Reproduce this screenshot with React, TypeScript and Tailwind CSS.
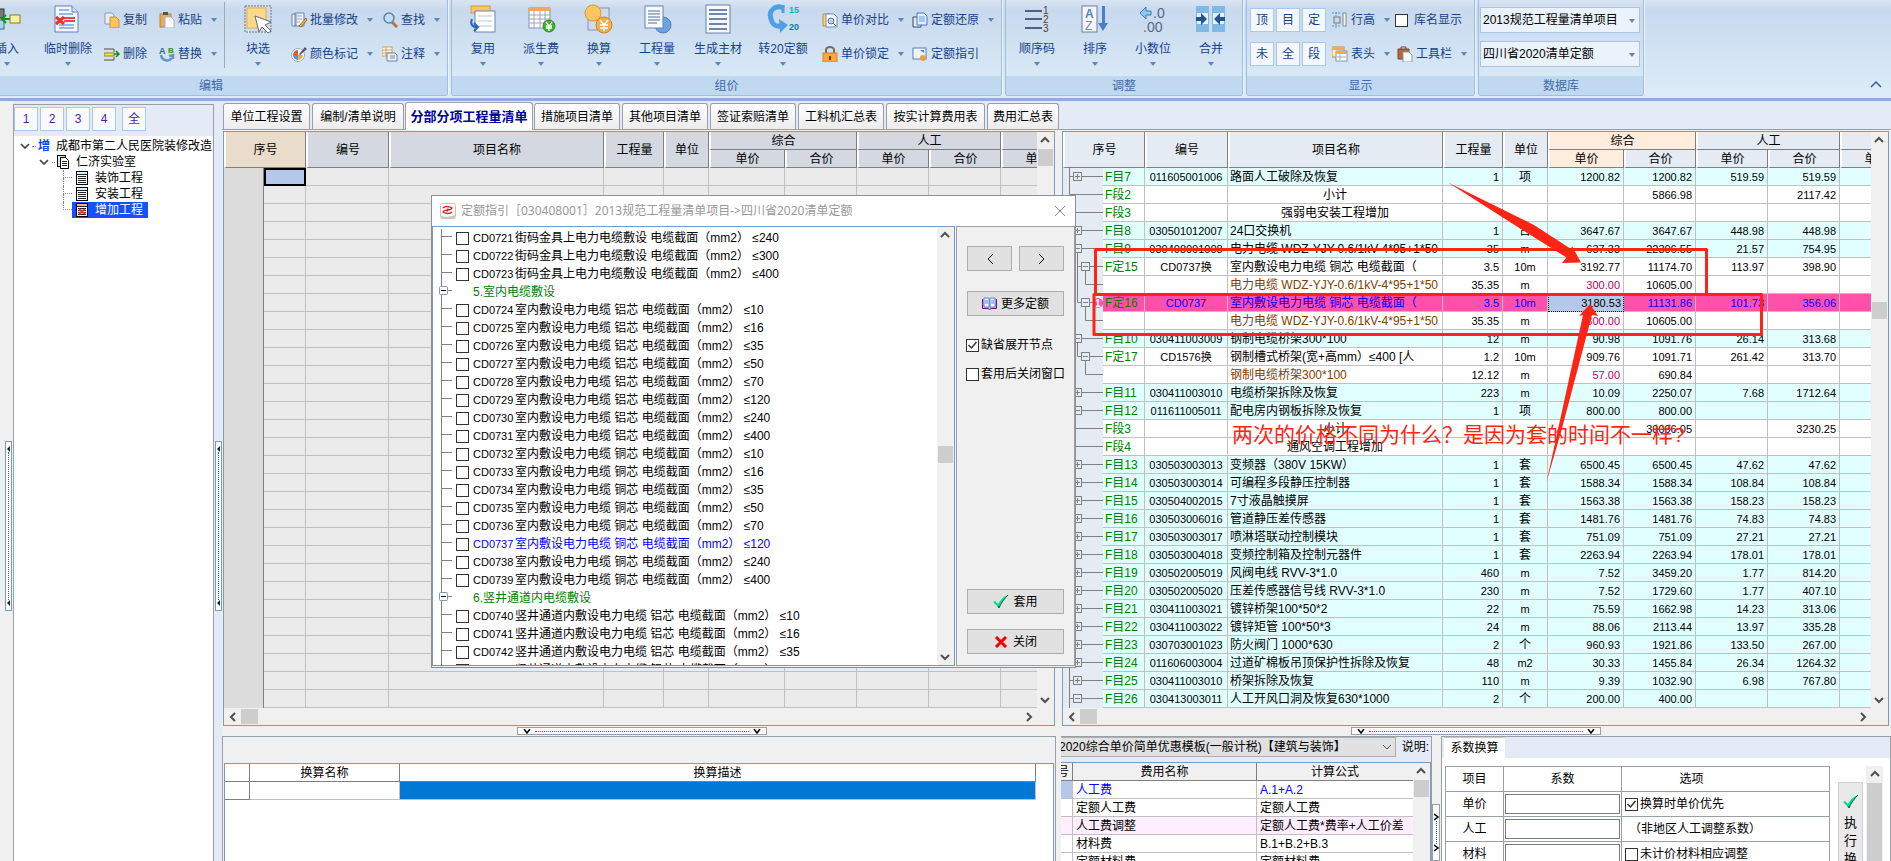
import React from "react";

type Cell = string | undefined;

type Row = {
  kind: "item" | "section" | "quota" | "material" | "active";
  tree: string;
  no?: Cell;
  code?: Cell;
  name: string;
  qty?: Cell;
  unit?: Cell;
  price?: Cell;
  total?: Cell;
  laborPrice?: Cell;
  laborTotal?: Cell;
};

const item = (
  tree: string,
  no: string,
  code: string,
  name: string,
  qty: string,
  unit: string,
  price: string,
  total: string,
  laborPrice?: string,
  laborTotal?: string,
): Row => ({ kind: "item", tree, no, code, name, qty, unit, price, total, laborPrice, laborTotal });

const rows: Row[] = [
  item("plus", "F目7", "011605001006", "路面人工破除及恢复", "1", "项", "1200.82", "1200.82", "519.59", "519.59"),
  { kind: "section", tree: "end", no: "F段2", name: "小计", total: "5866.98", laborTotal: "2117.42" },
  { kind: "section", tree: "line", no: "F段3", name: "强弱电安装工程增加" },
  item("plus", "F目8", "030501012007", "24口交换机", "1", "台", "3647.67", "3647.67", "448.98", "448.98"),
  item("open", "F目9", "030408001008", "电力电缆 WDZ-YJY-0.6/1kV-4*95+1*50", "35", "m", "637.33", "22306.55", "21.57", "754.95"),
  { kind: "quota", tree: "sub", no: "F定15", code: "CD0737换", name: "室内敷设电力电缆 铜芯 电缆截面（", qty: "3.5", unit: "10m", price: "3192.77", total: "11174.70", laborPrice: "113.97", laborTotal: "398.90" },
  { kind: "material", tree: "leafMore", name: "电力电缆 WDZ-YJY-0.6/1kV-4*95+1*50", qty: "35.35", unit: "m", price: "300.00", total: "10605.00" },
  { kind: "active", tree: "subLast", no: "F定16", code: "CD0737", name: "室内敷设电力电缆 铜芯 电缆截面（", qty: "3.5", unit: "10m", price: "3180.53", total: "11131.86", laborPrice: "101.73", laborTotal: "356.06" },
  { kind: "material", tree: "leaf", name: "电力电缆 WDZ-YJY-0.6/1kV-4*95+1*50", qty: "35.35", unit: "m", price: "300.00", total: "10605.00" },
  item("open", "F目10", "030411003009", "钢制电缆桥架300*100", "12", "m", "90.98", "1091.76", "26.14", "313.68"),
  { kind: "quota", tree: "subLast", no: "F定17", code: "CD1576换", name: "钢制槽式桥架(宽+高mm）≤400 [人", qty: "1.2", unit: "10m", price: "909.76", total: "1091.71", laborPrice: "261.42", laborTotal: "313.70" },
  { kind: "material", tree: "leaf", name: "钢制电缆桥架300*100", qty: "12.12", unit: "m", price: "57.00", total: "690.84" },
  item("plus", "F目11", "030411003010", "电缆桥架拆除及恢复", "223", "m", "10.09", "2250.07", "7.68", "1712.64"),
  item("minus", "F目12", "011611005011", "配电房内钢板拆除及恢复", "1", "项", "800.00", "800.00"),
  { kind: "section", tree: "end", no: "F段3", name: "小计", total: "30096.05", laborTotal: "3230.25" },
  { kind: "section", tree: "line", no: "F段4", name: "通风空调工程增加" },
  item("plus", "F目13", "030503003013", "变频器（380V 15KW）", "1", "套", "6500.45", "6500.45", "47.62", "47.62"),
  item("plus", "F目14", "030503003014", "可编程多段静压控制器", "1", "套", "1588.34", "1588.34", "108.84", "108.84"),
  item("plus", "F目15", "030504002015", "7寸液晶触摸屏", "1", "套", "1563.38", "1563.38", "158.23", "158.23"),
  item("plus", "F目16", "030503006016", "管道静压差传感器", "1", "套", "1481.76", "1481.76", "74.83", "74.83"),
  item("plus", "F目17", "030503003017", "喷淋塔联动控制模块", "1", "套", "751.09", "751.09", "27.21", "27.21"),
  item("plus", "F目18", "030503004018", "变频控制箱及控制元器件", "1", "套", "2263.94", "2263.94", "178.01", "178.01"),
  item("plus", "F目19", "030502005019", "风阀电线 RVV-3*1.0", "460", "m", "7.52", "3459.20", "1.77", "814.20"),
  item("plus", "F目20", "030502005020", "压差传感器信号线 RVV-3*1.0", "230", "m", "7.52", "1729.60", "1.77", "407.10"),
  item("plus", "F目21", "030411003021", "镀锌桥架100*50*2", "22", "m", "75.59", "1662.98", "14.23", "313.06"),
  item("plus", "F目22", "030411003022", "镀锌矩管 100*50*3", "24", "m", "88.06", "2113.44", "13.97", "335.28"),
  item("plus", "F目23", "030703001023", "防火阀门 1000*630", "2", "个", "960.93", "1921.86", "133.50", "267.00"),
  item("plus", "F目24", "011606003004", "过道矿棉板吊顶保护性拆除及恢复", "48", "m2", "30.33", "1455.84", "26.34", "1264.32"),
  item("plus", "F目25", "030411003010", "桥架拆除及恢复", "110", "m", "9.39", "1032.90", "6.98", "767.80"),
  item("minus", "F目26", "030413003011", "人工开风口洞及恢复630*1000", "2", "个", "200.00", "400.00"),
];

const street = "街码金具上电力电缆敷设 电缆截面（mm2） ≤";
const indoorAl = "室内敷设电力电缆 铝芯 电缆截面（mm2） ≤";
const indoorCu = "室内敷设电力电缆 铜芯 电缆截面（mm2） ≤";
const shaftAl = "竖井通道内敷设电力电缆 铝芯 电缆截面（mm2） ≤";

const quotas: { code?: string; text: string }[] = [
  { code: "CD0721", text: street + "240" },
  { code: "CD0722", text: street + "300" },
  { code: "CD0723", text: street + "400" },
  { text: "5.室内电缆敷设" },
  { code: "CD0724", text: indoorAl + "10" },
  { code: "CD0725", text: indoorAl + "16" },
  { code: "CD0726", text: indoorAl + "35" },
  { code: "CD0727", text: indoorAl + "50" },
  { code: "CD0728", text: indoorAl + "70" },
  { code: "CD0729", text: indoorAl + "120" },
  { code: "CD0730", text: indoorAl + "240" },
  { code: "CD0731", text: indoorAl + "400" },
  { code: "CD0732", text: indoorCu + "10" },
  { code: "CD0733", text: indoorCu + "16" },
  { code: "CD0734", text: indoorCu + "35" },
  { code: "CD0735", text: indoorCu + "50" },
  { code: "CD0736", text: indoorCu + "70" },
  { code: "CD0737", text: indoorCu + "120" },
  { code: "CD0738", text: indoorCu + "240" },
  { code: "CD0739", text: indoorCu + "400" },
  { text: "6.竖井通道内电缆敷设" },
  { code: "CD0740", text: shaftAl + "10" },
  { code: "CD0741", text: shaftAl + "16" },
  { code: "CD0742", text: shaftAl + "35" },
  { code: "CD0743", text: shaftAl + "50" },
];

const tabs = [
  { label: "单位工程设置", width: "w-[87px]" },
  { label: "编制/清单说明", width: "w-[92px]" },
  { label: "分部分项工程量清单", width: "w-[128px]" },
  { label: "措施项目清单", width: "w-[86px]" },
  { label: "其他项目清单", width: "w-[86px]" },
  { label: "签证索赔清单", width: "w-[86px]" },
  { label: "工料机汇总表", width: "w-[86px]" },
  { label: "按实计算费用表", width: "w-[99px]" },
  { label: "费用汇总表", width: "w-[72px]" },
];

/* ---------- icons ---------- */

const page = (
  <path d="M1 1h17l6 6v20H1z" fill="#f4f8fe" stroke="#5f82b8" />
);

const bigIcons: Record<string, React.ReactNode> = {
  insert: (
    <g>
      <rect x="2" y="4" width="9" height="9" fill="#777" stroke="#333" />
      <rect x="2" y="15" width="9" height="9" fill="#a8d4e8" stroke="#3a6d8c" />
      <path d="M17 14H9m4-4-4 4 4 4" stroke="#14910f" strokeWidth="2" fill="none" />
      <rect x="17" y="10" width="10" height="8" fill="#f8f2a0" stroke="#8f7a22" />
    </g>
  ),
  tempDelete: (
    <g>
      {page}
      <path d="M18 1v6h6" fill="#d6e4f6" stroke="#5f82b8" />
      <path d="M5 5h10M5 9h14M5 20h15M5 23h15" stroke="#7aa3dc" strokeWidth="1.5" />
      <path d="M10 13h11M10 16h11" stroke="#e01010" strokeWidth="1.6" />
      <path d="m2 12 8 7m0-7-8 7" stroke="#e8352a" strokeWidth="3" />
    </g>
  ),
  blockSelect: (
    <g>
      <rect x="1" y="1" width="26" height="26" fill="none" stroke="#777" strokeDasharray="2 1" />
      <rect x="3" y="3" width="19" height="20" fill="#fbd88a" stroke="#e2b04a" />
      <path d="m11 11 16 6-6 3 6 6-3 2-6-6-3 5z" fill="#fff" stroke="#667" />
    </g>
  ),
  reuse: (
    <g>
      <rect x="2" y="1" width="19" height="7" fill="#f9c76a" stroke="#d89a38" />
      <rect x="6" y="6" width="20" height="21" fill="#fff" stroke="#6d86b4" />
      <path d="M9 11h14M9 16h14M9 21h14" stroke="#b9c6dd" />
      <path d="M3 14c-2 5 0 8 5 8m-3-4 4 4-4 4" fill="none" stroke="#2869b8" strokeWidth="2" />
    </g>
  ),
  fee: (
    <g>
      <rect x="2" y="3" width="21" height="20" fill="#fff" stroke="#8093b5" />
      <rect x="2" y="2" width="21" height="4" fill="#f0a860" />
      <path d="M2 10h21M2 14h21M2 18h21M7 6v17M13 6v17M18 6v17" stroke="#9aa6bd" />
      <circle cx="22" cy="21" r="6" fill="#43b02e" stroke="#2e8720" />
      <path d="m19 17 3 4 3-4M19 21h6M19 23h6M22 21v5" stroke="#fff" fill="none" strokeWidth="1.3" />
    </g>
  ),
  convert: (
    <g>
      <rect x="3" y="3" width="21" height="22" fill="#d0dbed" stroke="#8793aa" />
      <circle cx="8" cy="8" r="8" fill="#fbc55f" stroke="#d99b33" />
      <circle cx="19" cy="20" r="8" fill="#f5ae48" stroke="#cf822a" />
      <path d="m15 15 4 5 4-5M15 20h8M15 23h8M19 20v6" stroke="#fff" fill="none" strokeWidth="1.5" />
    </g>
  ),
  quantity: (
    <g>
      <circle cx="20" cy="20" r="8" fill="#6ba5df" stroke="#4b80bb" />
      <rect x="2" y="1" width="18" height="22" fill="#f6f9ff" stroke="#6b81ab" />
      <path d="M5 6h12M5 9h12M5 12h12M5 15h12M5 18h9" stroke="#56709f" />
    </g>
  ),
  material: (
    <g>
      <rect x="2" y="0" width="24" height="28" fill="#f6f9ff" stroke="#6b81ab" />
      <path d="M5 5h18M5 9h18M5 14h18M5 19h18M5 24h18" stroke="#46608f" strokeWidth="1.5" />
    </g>
  ),
  c20: (
    <g>
      <path d="M15 3C6-1-1 6 2 14c1 5 5 8 10 7" fill="none" stroke="#4f9fe4" strokeWidth="5" />
      <path d="M14 0v8" stroke="#4f9fe4" strokeWidth="3" />
      <path d="m10 14 9 6-8 8z" fill="#4f9fe4" />
      <text x="20" y="8" fontSize="9" fontWeight="bold" fill="#12b3a8">15</text>
      <text x="20" y="25" fontSize="9" fontWeight="bold" fill="#137b93">20</text>
    </g>
  ),
  order: (
    <g>
      <path d="M2 6h17M2 14h17M2 23h17" stroke="#4c5e8c" strokeWidth="2" />
      <text x="20" y="9" fontSize="10" fill="#5a4020">1</text>
      <text x="20" y="18" fontSize="10" fill="#5a4020">2</text>
      <text x="20" y="27" fontSize="10" fill="#5a4020">3</text>
    </g>
  ),
  sort: (
    <g>
      <rect x="1" y="1" width="15" height="26" fill="#f4f8fe" stroke="#6c7da0" />
      <text x="4" y="13" fontSize="12" fill="#5c80b0" fontWeight="bold">A</text>
      <text x="4" y="25" fontSize="12" fill="#7488aa">Z</text>
      <path d="M21 1h3v17h3l-5 8-5-8h4z" fill="#4c7fc8" />
    </g>
  ),
  decimal: (
    <g>
      <path d="m1 8 6-6v4h5v4H7v4z" fill="#8ec9ee" stroke="#3b7bb0" />
      <text x="14" y="13" fontSize="14" fill="#55677f">.0</text>
      <text x="4" y="27" fontSize="14" fill="#55677f">.00</text>
    </g>
  ),
  merge: (
    <g>
      <rect x="-1" y="1" width="13" height="26" fill="#7fb9e6" />
      <rect x="15" y="1" width="13" height="26" fill="#7fb9e6" />
      <path d="M0 8h11v11H0zM16 8h11v11H16z" fill="#e6f3fd" />
      <path d="M-1 12h5V8l6 6-6 6v-4h-5zM28 12h-5V8l-6 6 6 6v-4h5z" fill="#24538f" />
    </g>
  ),
};

const smallIcons: Record<string, React.ReactNode> = {
  copy: (
    <g>
      <path d="M1 1h7l2 2v9H1z" fill="#e8eef8" stroke="#8c9ab5" />
      <path d="M6 5h6l3 3v8H6z" fill="#fbc55b" stroke="#cc9236" />
    </g>
  ),
  paste: (
    <g>
      <rect x="1" y="2" width="11" height="13" fill="#e8ae55" stroke="#b98434" />
      <rect x="4" y="0" width="5" height="3" fill="#555" />
      <path d="M6 5h6l3 3v8H6z" fill="#fff" stroke="#aab3c4" />
    </g>
  ),
  remove: (
    <g>
      <path d="M0 3h10v3M0 14h10v-3" fill="none" stroke="#5c4a2c" />
      <rect x="0" y="7" width="10" height="3" fill="#f3ea4c" stroke="#8f8322" />
      <path d="M10 8h5m-3-3 3 3-3 3" stroke="#138a13" fill="none" strokeWidth="1.5" />
    </g>
  ),
  replace: (
    <g>
      <text x="0" y="8" fontSize="9" fontWeight="bold" fill="#2a5ea8">A</text>
      <text x="9" y="7" fontSize="8" fontWeight="bold" fill="#3a8a2a">B</text>
      <path d="M2 9c1 6 8 7 11 3m-3-2 4-1v4" stroke="#6a94c8" strokeWidth="2.5" fill="none" />
    </g>
  ),
  batch: (
    <g>
      <path d="M1 2h4v12H1zM4 1h9v13H4z" fill="#f2f6fd" stroke="#6a7fae" />
      <path d="M6 4h5M6 7h5M6 10h3" stroke="#8ea3cc" />
      <path d="m8 14 7-8 1 2-6 7z" fill="#f0b454" stroke="#99682a" />
    </g>
  ),
  find: (
    <g>
      <circle cx="7" cy="6" r="5" fill="#bfe0fa" stroke="#5f7fae" strokeWidth="1.5" />
      <path d="m10 10 5 5" stroke="#b5763a" strokeWidth="3" />
    </g>
  ),
  color: (
    <g>
      <circle cx="7" cy="9" r="6.5" fill="#fff" stroke="#98a6be" />
      <path d="M7 9V4a5 5 0 0 0-5 5z" fill="#e8553b" />
      <path d="M7 9H2a5 5 0 0 0 5 5z" fill="#4b95da" />
      <path d="M7 9v5a5 5 0 0 0 5-5z" fill="#f4a93a" />
      <path d="m8 8 6-7 2 2-7 6z" fill="#4d5c74" />
    </g>
  ),
  note: (
    <g>
      <rect x="0" y="1" width="10" height="9" fill="#fff" stroke="#d79c45" />
      <path d="M0 4h10M0 7h10M4 1v9" stroke="#d79c45" />
      <path d="M5 7h8l2 2v6H5z" fill="#eef3fb" stroke="#6c7fa5" />
      <path d="M8 10h5M8 12h5" stroke="#7386aa" />
    </g>
  ),
  compare: (
    <g>
      <path d="M1 2h7v12H1z" fill="#fbd27a" stroke="#bb903e" />
      <path d="M4 2h8l3 3v10H4z" fill="#fff" stroke="#7289b5" />
      <circle cx="9" cy="9" r="3" fill="#b6d6f4" stroke="#4b77b0" />
      <path d="m11 11 3 3" stroke="#4b77b0" />
    </g>
  ),
  lock: (
    <g>
      <path d="M4 7V4a4 3 0 0 1 8 0v3" fill="none" stroke="#7c6a58" strokeWidth="2" />
      <rect x="1" y="7" width="14" height="9" fill="#f7a83e" stroke="#d0822a" />
      <path d="M8 10v4" stroke="#6a3b10" strokeWidth="2" />
    </g>
  ),
  restore: (
    <g>
      <path d="M1 5h8v10H1z" fill="#dfe8f6" stroke="#444" />
      <path d="M5 1h7l3 3v9H5z" fill="#e4f0ff" stroke="#3e79d8" />
      <path d="M7 5h6M7 7h6M7 9h6" stroke="#6a9be2" />
    </g>
  ),
  guide: (
    <g>
      <rect x="1" y="2" width="13" height="11" fill="#eef4fc" stroke="#5f7db4" />
      <path d="M8 4h4v3z" fill="#5f7db4" />
      <circle cx="11" cy="12" r="3" fill="#f0a030" />
    </g>
  ),
  rowHeight: (
    <g>
      <rect x="2" y="5" width="6" height="6" fill="none" stroke="#777" />
      <path d="M0 1h8M0 14h8M4 0v4M4 12v4" stroke="#4a9ed8" strokeDasharray="2 1" />
      <rect x="11" y="1" width="3" height="13" fill="#f5f5f5" stroke="#888" />
    </g>
  ),
  header: (
    <g>
      <rect x="0" y="1" width="12" height="10" fill="#fdf2d8" stroke="#c48b35" />
      <rect x="0" y="1" width="12" height="3" fill="#f3ac47" />
      <rect x="4" y="5" width="11" height="10" fill="#fff" stroke="#8a96ac" />
      <rect x="4" y="5" width="11" height="3" fill="#f3ac47" />
      <path d="M5 11h9M8 8v6" stroke="#a0a9b8" />
    </g>
  ),
  toolbar: (
    <g>
      <path d="M1 3h11v10H1z" fill="#b06a3c" stroke="#7c4525" />
      <path d="M4 3V1h5v2" fill="none" stroke="#7c4525" />
      <path d="M6 6h6l3 3v7H6z" fill="#f7faff" stroke="#8b9bb8" />
    </g>
  ),
};

function DownArrow() {
  return (
    <svg width="8" height="4" viewBox="0 0 8 4" aria-hidden="true">
      <path d="M1 0h6L4 4z" fill="#5a87bd" />
    </svg>
  );
}

function BigButton({ icon, label, width = "w-[58px]" }: { icon: string; label: string; width?: string }) {
  return (
    <button type="button" className={`flex shrink-0 flex-col items-center pt-[5px] ${width}`}>
      <svg width="28" height="28" viewBox="0 0 28 28" overflow="visible" aria-hidden="true">
        {bigIcons[icon]}
      </svg>
      <span className="mt-2 leading-4 whitespace-nowrap">{label}</span>
      <span className="mt-[5px] flex">
        <DownArrow />
      </span>
    </button>
  );
}

function SmallButton({ icon, label, arrow = true }: { icon: string; label: string; arrow?: boolean }) {
  return (
    <button type="button" className="flex h-[26px] items-center gap-[3px] whitespace-nowrap">
      <svg width="16" height="16" viewBox="0 0 16 16" aria-hidden="true">
        {smallIcons[icon]}
      </svg>
      <span>{label}</span>
      {arrow && (
        <span className="ml-[5px]">
          <DownArrow />
        </span>
      )}
    </button>
  );
}

function Column({ width, children }: { width: string; children: React.ReactNode }) {
  return <div className={`flex shrink-0 flex-col items-start gap-2 pt-[7px] ${width}`}>{children}</div>;
}

function Group({ title, width, children }: { title: string; width: string; children: React.ReactNode }) {
  return (
    <section
      className={`flex h-[96px] shrink-0 flex-col overflow-hidden rounded-b-[3px] border-x border-b border-[#9fbfdd] shadow-[1px_0_0_#eaf4fc] ${width}`}
    >
      <div className="flex h-[76px] shrink-0">{children}</div>
      <h2 className="flex-1 bg-[#c0d8f0] text-center leading-[21px] text-[#3e6aaa]">{title}</h2>
    </section>
  );
}

function DbSelect({ label, value }: { label: string; value: string }) {
  return (
    <div className="relative">
      <select
        aria-label={label}
        className="h-[26px] w-[160px] appearance-none border border-[#a9c3e4] bg-[#eaf2fb] pl-[2px] text-black"
      >
        <option>{value}</option>
      </select>
      <span className="pointer-events-none absolute top-3 right-1 flex">
        <DownArrow />
      </span>
    </div>
  );
}

function Ribbon() {
  return (
    <header className="flex h-[101px] shrink-0 items-start gap-[3px] overflow-hidden border-b-3 border-[#8fadd8] bg-linear-to-b from-[#d9e5f3] from-0% via-[#c8d9ee] via-10% to-[#dbebf8] to-90% text-[#15428b]">
      {/* the first group runs off the left edge */}
      <Group title="编辑" width="-ml-[26px] w-[474px]">
        <div className="ml-[3px] flex">
          <BigButton icon="insert" label="插入" />
          <BigButton icon="tempDelete" label="临时删除" width="w-[64px]" />
        </div>
        <div className="ml-1 flex">
          <Column width="w-[55px]">
            <SmallButton icon="copy" label="复制" arrow={false} />
            <SmallButton icon="remove" label="删除" arrow={false} />
          </Column>
          <Column width="w-[65px]">
            <SmallButton icon="paste" label="粘贴" />
            <SmallButton icon="replace" label="替换" />
          </Column>
        </div>
        <div className="mt-[2px] h-[66px] w-px shrink-0 bg-[#a0a8b4]" />
        <BigButton icon="blockSelect" label="块选" width="w-[66px]" />
        <Column width="w-[91px]">
          <SmallButton icon="batch" label="批量修改" />
          <SmallButton icon="color" label="颜色标记" />
        </Column>
        <Column width="w-[64px]">
          <SmallButton icon="find" label="查找" />
          <SmallButton icon="note" label="注释" />
        </Column>
      </Group>
      <Group title="组价" width="w-[551px]">
        <div className="ml-[2px] flex">
          <BigButton icon="reuse" label="复用" />
          <BigButton icon="fee" label="派生费" />
          <BigButton icon="convert" label="换算" />
          <BigButton icon="quantity" label="工程量" />
          <BigButton icon="material" label="生成主材" width="w-[64px]" />
          <BigButton icon="c20" label="转20定额" width="w-[66px]" />
        </div>
        <div className="ml-[6px] flex">
          <Column width="w-[90px]">
            <SmallButton icon="compare" label="单价对比" />
            <SmallButton icon="lock" label="单价锁定" />
          </Column>
          <Column width="w-[86px]">
            <SmallButton icon="restore" label="定额还原" />
            <SmallButton icon="guide" label="定额指引" arrow={false} />
          </Column>
        </div>
      </Group>
      <Group title="调整" width="w-[238px]">
        <div className="ml-[2px] flex">
          <BigButton icon="order" label="顺序码" />
          <BigButton icon="sort" label="排序" />
          <BigButton icon="decimal" label="小数位" />
          <BigButton icon="merge" label="合并" />
        </div>
      </Group>
      <Group title="显示" width="w-[229px]">
        <div className="ml-[3px] grid shrink-0 grid-cols-3 content-start gap-x-[2px] gap-y-[10px] pt-2">
          {["顶", "目", "定", "未", "全", "段"].map((t) => (
            <button key={t} type="button" className="size-6 border border-[#a9c8ea] bg-[#f2f8fe] leading-5">
              {t}
            </button>
          ))}
        </div>
        <div className="ml-[6px] flex flex-col gap-2 pt-[7px]">
          <div className="flex">
            <div className="w-[63px]">
              <SmallButton icon="rowHeight" label="行高" />
            </div>
            <label className="flex h-[26px] items-center gap-[6px] whitespace-nowrap">
              <input type="checkbox" className="size-[13px] appearance-none border border-[#333] bg-white" />
              库名显示
            </label>
          </div>
          <div className="flex">
            <div className="w-[65px]">
              <SmallButton icon="header" label="表头" />
            </div>
            <SmallButton icon="toolbar" label="工具栏" />
          </div>
        </div>
      </Group>
      <Group title="数据库" width="w-[166px]">
        <div className="flex flex-col gap-2 pt-[7px] pl-px">
          <DbSelect label="清单库" value="2013规范工程量清单项目" />
          <DbSelect label="定额库" value="四川省2020清单定额" />
        </div>
      </Group>
      <button type="button" aria-label="折叠功能区" className="mt-[79px] mr-[9px] ml-auto">
        <svg width="12" height="12" viewBox="0 0 12 12" fill="none" stroke="#3b5f96" strokeWidth="1.5">
          <path d="m1 8 5-5 5 5" />
        </svg>
      </button>
    </header>
  );
}

/* ---------- left tree ---------- */

function PageIcon({ header = "#d8f4fa", mark = false }: { header?: string; mark?: boolean }) {
  return (
    <svg width="12" height="14" viewBox="0 0 12 14" className="shrink-0" aria-hidden="true">
      <rect x="0.5" y="0.5" width="11" height="13" fill="#fff" stroke="#000" />
      <rect x="1" y="1" width="10" height="2" fill={header} />
      <path d="M1 3.5h10M2 5.5h8M2 7.5h8M2 9.5h8M2 11.5h8" stroke="#222" />
      {mark && <path d="m3 6 6 5m0-5-6 5" stroke="#e33" strokeWidth="2" />}
    </svg>
  );
}

function Chevron() {
  return (
    <svg width="10" height="6" viewBox="0 0 10 6" fill="none" stroke="#444" strokeWidth="1.7" aria-hidden="true">
      <path d="m1 1 4 4 4-4" />
    </svg>
  );
}

function SideHandle() {
  return (
    <div className="flex h-[170px] w-[7px] flex-col items-center justify-between border border-[#7a9cbc] bg-white py-1">
      <svg width="5" height="6" viewBox="0 0 5 6"><path d="M4 0v6L1 3z" fill="#222" /></svg>
      <div className="flex-1 border-l border-dotted border-[#0078d7]" />
      <svg width="5" height="6" viewBox="0 0 5 6"><path d="M4 0v6L1 3z" fill="#222" /></svg>
    </div>
  );
}

function ProjectTree() {
  return (
    <aside className="flex w-[222px] shrink-0">
      <div className="flex w-[13px] justify-end bg-[#f0f0f0] pt-[340px] pr-[1px]">
        <SideHandle />
      </div>
      <div className="mt-[3px] w-[201px] shrink-0 overflow-hidden border border-b-0 border-[#9a9fa8] bg-white">
        <div className="flex h-[31px] gap-[2px] bg-[#e4ebf6] pt-[2px]">
          {["1", "2", "3", "4", "全"].map((t) => (
            <button
              key={t}
              type="button"
              className="size-6 border border-[#a9c8ea] bg-[#f7fbff] leading-5 text-[#4a1fa8] last:ml-1"
            >
              {t}
            </button>
          ))}
        </div>
        <ul className="pt-[2px] leading-4 whitespace-nowrap">
          <li className="flex h-4 items-center pl-[6px]">
            <Chevron />
            <span className="mx-[2px] w-1 border-t border-dotted border-[#888]" />
            <b className="mr-[6px] text-[#1040ff]">增</b>成都市第二人民医院装修改造
          </li>
          <li className="flex h-4 items-center pl-[25px]">
            <Chevron />
            <span className="mr-[2px] ml-[3px] w-[3px] border-t border-dotted border-[#888]" />
            <svg width="12" height="14" viewBox="0 0 12 14" className="mr-[7px]" aria-hidden="true">
              <rect x="0.5" y="0.5" width="8" height="11" fill="#c9eef5" stroke="#000" />
              <path d="M3.500 2.500h5l3 3v8h-8z" fill="#fff" stroke="#000" />
              <path d="M5 6.500h5M5 8.500h5M5 10.500h5" stroke="#222" />
            </svg>
            仁济实验室
          </li>
          {["装饰工程", "安装工程", "增加工程"].map((name, i) => (
            <li key={name} className="flex h-4 pl-[49px]">
              <span className="flex w-[9px] flex-col">
                <span
                  className={
                    i === 2
                      ? "h-2 border-b border-l border-dotted border-[#888]"
                      : "h-2 border-b border-l border-dotted border-[#888]"
                  }
                />
                {i < 2 && <span className="h-2 border-l border-dotted border-[#888]" />}
              </span>
              <a
                href="#"
                className={
                  i === 2
                    ? "flex items-center gap-[7px] bg-[#1650ff] pr-[5px] pl-1 text-white"
                    : "flex items-center gap-[7px] pl-1"
                }
              >
                <PageIcon header={i === 2 ? "#f8b090" : undefined} mark={i === 2} />
                {name}
              </a>
            </li>
          ))}
        </ul>
      </div>
      <div className="w-2 pt-[340px] pl-px">
        <SideHandle />
      </div>
    </aside>
  );
}

/* ---------- scroll bars and splitters ---------- */

const arrowPaths = {
  up: "m2 7 4-4 4 4",
  down: "m2 4 4 4 4-4",
  left: "M8 2 4 6l4 4",
  right: "m4 2 4 4-4 4",
};

function Arrow({ dir }: { dir: keyof typeof arrowPaths }) {
  return (
    <button type="button" aria-label={dir} className="flex size-[17px] shrink-0 items-center justify-center">
      <svg width="12" height="12" viewBox="0 0 12 12" fill="none" stroke="#505050" strokeWidth="2">
        <path d={arrowPaths[dir]} />
      </svg>
    </button>
  );
}

function VScroll({ offset, end = true }: { offset: string; end?: boolean }) {
  return (
    <div className="flex w-[17px] shrink-0 flex-col items-center bg-[#f0f0f0] pr-px">
      <Arrow dir="up" />
      <div className={offset} />
      <div className="h-[17px] w-[15px] shrink-0 bg-[#cdcdcd]" />
      <div className="flex-1" />
      {end && <Arrow dir="down" />}
    </div>
  );
}

function HScroll() {
  return (
    <div className="flex h-[17px] items-center bg-[#f0f0f0]">
      <Arrow dir="left" />
      <div className="h-[15px] w-[17px] bg-[#cdcdcd]" />
      <div className="flex-1" />
      <Arrow dir="right" />
      <div className="w-[17px]" />
    </div>
  );
}

function Splitter() {
  return (
    <div className="flex h-[10px] items-center justify-center">
      <div className="flex h-2 w-[250px] items-center gap-1 border border-[#9a9fa8] bg-white px-[5px]">
        <svg width="8" height="5" viewBox="0 0 8 5" fill="none" stroke="#000" strokeWidth="1.500"><path d="m1 0 3 4 3-4" /></svg>
        <div className="flex-1 border-t border-dotted border-[#0078d7]" />
        <svg width="8" height="5" viewBox="0 0 8 5" fill="none" stroke="#000" strokeWidth="1.500"><path d="m1 0 3 4 3-4" /></svg>
      </div>
    </div>
  );
}

/* ---------- quantity grids ---------- */

function GridCols() {
  return (
    <colgroup>
      <col className="w-[40px]" />
      <col className="w-[42px]" />
      <col className="w-[83px]" />
      <col className="w-[215px]" />
      <col className="w-[60px]" />
      <col className="w-[45px]" />
      <col className="w-[76px]" />
      <col className="w-[72px]" />
      <col className="w-[72px]" />
      <col className="w-[72px]" />
      <col className="w-[72px]" />
    </colgroup>
  );
}

function GridHead({ active }: { active: boolean }) {
  const base = "border-r border-b border-[#7f7f7f] border-l-2 border-l-white px-0 pt-px pb-0 font-normal ";
  const plain = base + (active ? "bg-[#e4ebf3]" : "bg-[#d4d8e0]");
  const first = base + (active ? "bg-[#e4ebf3]" : "bg-[#eadccb]");
  const current = base + (active ? "bg-[#ffecdc]" : "bg-[#d4d8e0]");
  return (
    <thead>
      <tr className="h-[18px]">
        <th colSpan={2} rowSpan={2} className={first}>序号</th>
        <th rowSpan={2} className={plain}>编号</th>
        <th rowSpan={2} className={plain}>项目名称</th>
        <th rowSpan={2} className={plain}>工程量</th>
        <th rowSpan={2} className={plain}>单位</th>
        <th colSpan={2} className={current}>综合</th>
        <th colSpan={2} className={plain}>人工</th>
        <th className={plain}></th>
      </tr>
      <tr className="h-[18px]">
        <th className={current}>单价</th>
        <th className={plain}>合价</th>
        <th className={plain}>单价</th>
        <th className={plain}>合价</th>
        <th className={plain}>单价</th>
      </tr>
    </thead>
  );
}

function EmptyGrid() {
  const cell = "border-r border-b border-[#c0c0c0] p-0";
  return (
    <div className="overflow-hidden border border-[#7a9cbc] bg-white">
      <div className="flex">
        <div className="min-w-0 flex-1 overflow-hidden">
          <table className="w-[849px] table-fixed border-separate border-spacing-0 bg-[#ebebeb] leading-4">
            <GridCols />
            <GridHead active={false} />
            <tbody>
              {rows.map((_, i) => (
                <tr key={i} className="h-[18px]">
                  <td className="border-r border-[#7f7f7f] bg-[#dcdcdc] p-0"></td>
                  <td className={i === 0 ? "border-2 border-black bg-[#b4c9ea] p-0" : cell}></td>
                  {Array.from({ length: 9 }, (_, c) => (
                    <td key={c} className={cell}></td>
                  ))}
                </tr>
              ))}
            </tbody>
          </table>
        </div>
        <VScroll offset="h-0" />
      </div>
      <HScroll />
    </div>
  );
}

function TreeCell({ type, marked }: { type: string; marked: boolean }) {
  return (
    <svg width="40" height="18" viewBox="0 0 40 18" className="block" fill="none" stroke="#808080" aria-hidden="true">
      {type === "end" && <path d="M6.500 0v8.500H40" />}
      {type === "line" && <path d="M6.500 18V8.500H40" />}
      {(type === "plus" || type === "minus" || type === "open") && (
        <>
          <path d="M6.500 0v18M6.500 8.500h4M19 8.500h21" />
          <rect x="10.500" y="4.500" width="8" height="8" />
          <path d="M12 8.500h5" />
          {type === "plus" && <path d="M14.500 6v5" />}
          {type === "open" && <path d="M14.500 13v5" />}
        </>
      )}
      {(type === "sub" || type === "subLast") && (
        <>
          <path d="M14.500 0v8.500h4M27 8.500h13M22.500 13v5" />
          {type === "sub" && <path d="M14.500 8v10" />}
          <rect x="18.500" y="4.500" width="8" height="8" />
          <path d="M20 8.500h5" />
        </>
      )}
      {(type === "leaf" || type === "leafMore") && <path d="M22.500 0v8.500H40" />}
      {type === "leafMore" && <path d="M14.500 0v18" />}
      {marked && (
        <g stroke="none">
          <circle cx="35" cy="9" r="5" fill="#ff50aa" />
          <text x="32" y="13" fontSize="10" fontWeight="bold" fill="#fff">1</text>
        </g>
      )}
    </svg>
  );
}

function BillGrid() {
  const line = "overflow-hidden border-r border-b border-[#c0c0c0] py-0 ";
  return (
    <div className="mr-[2px] overflow-hidden border border-[#7a9cbc] bg-white">
      <div className="flex">
        <div className="min-w-0 flex-1 overflow-hidden">
          <table className="w-[849px] table-fixed border-separate border-spacing-0 leading-4 whitespace-nowrap">
            <GridCols />
            <GridHead active />
            <tbody>
              {rows.map((r, i) => {
                const on = r.kind === "active";
                const tone = on
                  ? "h-[18px] bg-[#ff50aa] text-[#0000ff]"
                  : r.kind === "item"
                    ? "h-[18px] bg-[#e1ffff]"
                    : "h-[18px] bg-white";
                const material = r.kind === "material";
                const latinUnit = /^\w+$/.test(r.unit ?? "");
                const num = line + "px-[3px] text-right text-[11px]";
                return (
                  <tr key={i} className={tone}>
                    <td className="bg-[#e4ebf3] p-0">
                      <TreeCell type={r.tree} marked={on} />
                    </td>
                    <td className={line + "pr-0 pl-[2px] text-[#008000]"}>{r.no}</td>
                    <td className={line + "px-0 text-center text-[11px]"}>{r.code}</td>
                    <td
                      className={
                        line +
                        (r.kind === "section" ? "px-0 text-center" : "pr-0 pl-[2px]") +
                        (material ? " text-[#804000]" : "")
                      }
                    >
                      {r.name}
                    </td>
                    <td className={num}>{r.qty}</td>
                    <td className={line + "px-0 text-center" + (latinUnit ? " text-[11px]" : "")}>{r.unit}</td>
                    <td
                      className={
                        on
                          ? "border border-dotted border-black bg-[#b4c9ea] px-[2px] py-0 text-right text-[11px] text-black"
                          : num + (material ? " text-[#c00060]" : "")
                      }
                    >
                      {r.price}
                    </td>
                    <td className={num}>{r.total}</td>
                    <td className={num}>{r.laborPrice}</td>
                    <td className={num}>{r.laborTotal}</td>
                    <td className={num}></td>
                  </tr>
                );
              })}
            </tbody>
          </table>
        </div>
        <VScroll offset="h-[153px]" />
      </div>
      <HScroll />
    </div>
  );
}

/* ---------- bottom panels ---------- */

function ConversionPanel() {
  return (
    <div className="mr-[5px] flex-1 border border-b-0 border-[#9a9fa8] px-px pt-[26px]">
      <div className="h-full border border-b-0 border-[#7a9cbc] bg-white pr-[17px]">
        <table className="w-full table-fixed border-separate border-spacing-0 leading-4">
          <colgroup>
            <col className="w-[25px]" />
            <col className="w-[150px]" />
            <col />
          </colgroup>
          <thead>
            <tr className="h-[18px]">
              <th className="border-r border-b border-[#7f7f7f] p-0"></th>
              <th className="border-r border-b border-[#7f7f7f] p-0 font-normal">换算名称</th>
              <th className="border-r border-b border-[#7f7f7f] p-0 font-normal">换算描述</th>
            </tr>
          </thead>
          <tbody>
            <tr className="h-[18px]">
              <td className="border-r border-b border-[#7f7f7f] p-0"></td>
              <td className="border-r border-b border-[#c0c0c0] p-0"></td>
              <td className="border-r border-b border-[#c0c0c0] bg-[#0078d7] p-0"></td>
            </tr>
          </tbody>
        </table>
      </div>
    </div>
  );
}

const fees = [
  ["人工费", "A.1+A.2"],
  ["定额人工费", "定额人工费"],
  ["人工费调整", "定额人工费*费率+人工价差"],
  ["材料费", "B.1+B.2+B.3"],
  ["定额材料费", "定额材料费"],
];

function FeePanel() {
  return (
    <div className="flex min-w-0 flex-1 flex-col overflow-hidden border-t border-r border-[#9a9fa8] bg-[#e4ebf6]">
      <div className="flex h-[25px] shrink-0 items-start">
        <div className="relative -ml-[3px] min-w-0 flex-1">
          <select
            aria-label="综合单价模板"
            className="h-[20px] w-full appearance-none border border-[#adadad] bg-[#e1e1e1]"
          >
            <option>2020综合单价简单优惠模板(一般计税)【建筑与装饰】</option>
          </select>
          <svg className="pointer-events-none absolute top-[7px] right-1" width="10" height="6" viewBox="0 0 10 6" fill="none" stroke="#555">
            <path d="m1 1 4 4 4-4" />
          </svg>
        </div>
        <span className="pr-[2px] pl-[6px] leading-5">说明:</span>
      </div>
      <div className="flex flex-1 border-t border-r border-[#7a9cbc] bg-white">
        <div className="min-w-0 flex-1 overflow-hidden">
          <div className="-ml-[19px]">
            <table className="w-full table-fixed border-separate border-spacing-0 leading-4 whitespace-nowrap">
              <colgroup>
                <col className="w-[31px]" />
                <col className="w-[184px]" />
                <col />
              </colgroup>
              <thead>
                <tr className="h-[18px] bg-[#f0f0f0]">
                  <th className="border-r border-b border-[#7f7f7f] p-0 font-normal">序号</th>
                  <th className="border-r border-b border-[#7f7f7f] p-0 font-normal">费用名称</th>
                  <th className="border-b border-[#7f7f7f] p-0 font-normal">计算公式</th>
                </tr>
              </thead>
              <tbody>
                {fees.map(([name, formula], i) => (
                  <tr
                    key={name}
                    className={i === 0 ? "h-[18px] text-[#0000ff]" : i === 2 ? "h-[18px] bg-[#ffeeff]" : "h-[18px]"}
                  >
                    <td
                      className={
                        i === 0
                          ? "border-r border-b border-[#c0c0c0] bg-[#b4c9ea] p-0"
                          : "border-r border-b border-[#c0c0c0] p-0"
                      }
                    ></td>
                    <td className="border-r border-b border-[#c0c0c0] py-0 pr-0 pl-[3px]">{name}</td>
                    <td className="border-b border-[#c0c0c0] py-0 pr-0 pl-[3px]">{formula}</td>
                  </tr>
                ))}
              </tbody>
            </table>
          </div>
        </div>
        <VScroll offset="h-0" end={false} />
      </div>
    </div>
  );
}

function CheckBox({ checked = false, children }: { checked?: boolean; children: React.ReactNode }) {
  return (
    <label className="flex items-center gap-[2px] whitespace-nowrap">
      <span className="relative flex">
        <input
          type="checkbox"
          defaultChecked={checked}
          className="size-[13px] appearance-none border border-[#333] bg-white"
        />
        {checked && (
          <svg className="absolute inset-0" width="13" height="13" viewBox="0 0 13 13" fill="none" stroke="#333" strokeWidth="1.500">
            <path d="m2.500 6 3 3 5-6" />
          </svg>
        )}
      </span>
      {children}
    </label>
  );
}

function FactorPanel() {
  const cell = "border-r border-b border-[#9a9fa8] p-0 ";
  const factors: [string, React.ReactNode][] = [
    ["单价", <CheckBox checked>换算时单价优先</CheckBox>],
    ["人工", <span className="pl-1">（非地区人工调整系数）</span>],
    ["材料", <CheckBox>未计价材料相应调整</CheckBox>],
  ];
  return (
    <div className="flex w-[450px] shrink-0 flex-col border-t border-r border-l border-[#9a9fa8] bg-white">
      <div className="flex h-[21px] shrink-0 bg-[#e4ebf6]">
        <button type="button" className="ml-[2px] h-[21px] w-[61px] border-t border-[#c8c8c8] bg-white">
          系数换算
        </button>
      </div>
      <div className="flex flex-1 pt-[8px] pl-[3px]">
        <table className="w-[385px] table-fixed self-start border-separate border-spacing-0 border-t border-l border-[#9a9fa8] leading-4">
          <colgroup>
            <col className="w-[58px]" />
            <col className="w-[118px]" />
            <col />
          </colgroup>
          <thead>
            <tr className="h-[25px]">
              <th className={cell + "font-normal"}>项目</th>
              <th className={cell + "font-normal"}>系数</th>
              <th className={cell + "font-normal"}>
                <span className="mr-[68px]">选项</span>
              </th>
            </tr>
          </thead>
          <tbody>
            {factors.map(([name, option]) => (
              <tr key={name} className="h-[25px]">
                <td className={cell + "text-center"}>{name}</td>
                <td className={cell}>
                  <input aria-label={name + "系数"} className="mx-auto block h-5 w-[115px] border border-[#7a7a7a] bg-white" />
                </td>
                <td className={cell}>
                  <div className="ml-[3px]">{option}</div>
                </td>
              </tr>
            ))}
          </tbody>
        </table>
        <button
          type="button"
          className="mt-4 ml-2 flex h-[120px] w-[25px] shrink-0 flex-col items-center border border-[#d0d0d0] bg-[#e9e9e9] pt-3 text-[13px] leading-[18px]"
        >
          <CheckMark />
          <span className="mt-[5px] w-[13px]">执行换算</span>
        </button>
        <div className="ml-[3px] flex flex-col items-center bg-[#f0f0f0]">
          <Arrow dir="up" />
          <div className="w-[15px] flex-1 bg-[#cdcdcd]" />
        </div>
      </div>
    </div>
  );
}

function CheckMark() {
  return (
    <svg width="16" height="14" viewBox="0 0 16 14" aria-hidden="true">
      <path d="m0 7 2-1 3 3c3-5 6-8 10-9-4 4-7 8-9 13z" fill="#00e08c" />
      <path d="M15 0c-4 4-7 8-9 13l-1-2" fill="none" stroke="#063" strokeWidth="1" />
    </svg>
  );
}

/* ---------- quota guide window ---------- */

function QuotaRow({ code, text }: { code?: string; text: string }) {
  const current = code === "CD0737";
  if (!code) {
    return (
      <li className="flex h-[18px] shrink-0 items-center">
        <svg width="20" height="18" viewBox="0 0 20 18" className="mr-[20px] shrink-0" aria-hidden="true">
          <path d="M8.500 0v18M13 7.500h6" stroke="#808080" fill="none" />
          <rect x="6.500" y="3.500" width="8" height="8" rx="1" fill="#fff" stroke="#7a9cbc" />
          <path d="M8 7.500h5" stroke="#000" />
        </svg>
        <span className="text-[#008000]">{text}</span>
      </li>
    );
  }
  return (
    <li className="flex h-[18px] shrink-0 items-center">
      <svg width="20" height="18" viewBox="0 0 20 18" className="mr-[3px] shrink-0" fill="none" stroke="#808080" aria-hidden="true">
        <path d="M8.500 0v18M8.500 7.500H19" />
      </svg>
      <label className={current ? "flex items-center text-[#0000ff]" : "flex items-center"}>
        <input type="checkbox" className="mr-1 size-[13px] appearance-none border border-[#333] bg-white" />
        <span className="w-[42px] text-[11px]">{code}</span>
        {text}
      </label>
    </li>
  );
}

function QuotaDialog() {
  const btn = "flex h-[25px] items-center justify-center border border-[#adadad] bg-[#e1e1e1]";
  return (
    <div
      role="dialog"
      aria-labelledby="quota-title"
      className="absolute top-[195px] left-[431px] flex h-[473px] w-[645px] flex-col border border-[#8f8f8f] bg-[#f0f0f0]"
    >
      <div className="flex h-[30px] shrink-0 items-center bg-white pr-[9px] pl-[8px] text-[#999]">
        <svg width="16" height="16" viewBox="0 0 16 16" aria-hidden="true">
          <rect x="0.500" y="0.500" width="15" height="15" rx="2" fill="#fff" stroke="#e7b7ae" />
          <path d="M1 15h14v-3c-5 2-9 2-14 1z" fill="#b8d0cc" />
          <path d="M3 5c2-2 6-2 9 0-1 2-3 2-5 1M12 9c-2 2-6 2-9 0 1-2 3-2 5-1" fill="none" stroke="#d8222a" strokeWidth="1.500" />
        </svg>
        <h2 id="quota-title" className="ml-[5px] flex-1 font-['Noto_Sans','Noto_Sans_CJK_SC',sans-serif] whitespace-pre">
          {"定额指引［030408001］2013规范工程量清单项目->四川省2020清单定额"}
        </h2>
        <button type="button" aria-label="关闭窗口">
          <svg width="12" height="12" viewBox="0 0 12 12" stroke="#888">
            <path d="m1 1 10 10M11 1 1 11" />
          </svg>
        </button>
      </div>
      <div className="flex min-h-0 flex-1 pb-px">
        <div className="flex min-w-0 flex-1 border border-[#7a9cbc] bg-white">
          <ul className="flex min-w-0 flex-1 flex-col overflow-hidden pt-[2px] leading-4 whitespace-pre">
            {quotas.map((q) => (
              <QuotaRow key={q.text} {...q} />
            ))}
          </ul>
          <VScroll offset="h-[202px]" />
        </div>
        <div className="ml-px flex w-[119px] flex-col border border-[#9a9fa8] px-[10px] pt-[19px] pb-[11px]">
          <div className="flex justify-between">
            <button type="button" aria-label="上一条" className={btn + " w-[45px]"}>
              <svg width="8" height="12" viewBox="0 0 8 12" fill="none" stroke="#000"><path d="M7 1 2 6l5 5" /></svg>
            </button>
            <button type="button" aria-label="下一条" className={btn + " w-[45px]"}>
              <svg width="8" height="12" viewBox="0 0 8 12" fill="none" stroke="#000"><path d="m1 1 5 5-5 5" /></svg>
            </button>
          </div>
          <button type="button" className={btn + " mt-5 gap-1"}>
            <svg width="15" height="13" viewBox="0 0 15 13" aria-hidden="true">
              <path d="M0.500 2v9.500H6l1.500 1L9 11.500h5.500V2" fill="#a8c8f0" stroke="#70108a" />
              <path d="M2 1h5v9H2zM8 1h5v9H8z" fill="#fff" stroke="#5080d0" />
              <path d="M3 4h3M3 6h3M9 4h3M9 6h3" stroke="#5080d0" />
            </svg>
            更多定额
          </button>
          <div className="mt-5 -mr-3 -ml-px flex flex-col gap-[11px] leading-[18px]">
            <CheckBox checked>缺省展开节点</CheckBox>
            <CheckBox>套用后关闭窗口</CheckBox>
          </div>
          <button type="button" className={btn + " mt-auto gap-1"}>
            <CheckMark />
            套用
          </button>
          <button type="button" className={btn + " mt-[15px] gap-[5px]"}>
            <svg width="14" height="12" viewBox="0 0 14 12" stroke="#f00000" strokeWidth="3" aria-hidden="true">
              <path d="m2 1 10 10M12 1 2 11" />
            </svg>
            关闭
          </button>
        </div>
      </div>
    </div>
  );
}

// hand-drawn remarks on top of the grid
function Remarks() {
  return (
    <>
      <svg
        className="pointer-events-none absolute top-[180px] left-[1090px]"
        width="680"
        height="310"
        viewBox="1090 180 680 310"
        fill="none"
        stroke="#ff2414"
        strokeWidth="3"
        strokeLinejoin="round"
        aria-hidden="true"
      >
        <path d="M1095.500 294V249.500h611V294" />
        <rect x="1094" y="294.500" width="667.500" height="40" />
        <path
          d="M1448 182.500 1534 225l37 24 1-3 9 16.500-19 .5 4.500-5.500L1524 231z"
          fill="#ff2414"
          stroke="none"
        />
        <path d="M1546.500 482 1583 315l-4 1 11-12 8 12-6-1-31 117z" fill="#ff2414" stroke="none" />
      </svg>
      <p className="pointer-events-none absolute top-[420px] left-[1232px] text-[21px] leading-[30px] whitespace-nowrap text-[#ff2414]">
        两次的价格不同为什么？是因为套的时间不一样?
      </p>
    </>
  );
}

export default function App() {
  return (
    <div className="relative flex h-screen flex-col overflow-hidden bg-[#e4ebf6] font-['Liberation_Sans','Noto_Sans_CJK_SC',sans-serif] text-[12px] text-black">
      <Ribbon />
      <div className="flex min-h-0 flex-1">
        <ProjectTree />
        <main className="flex min-w-0 flex-1 flex-col">
          <nav className="flex h-[29px] shrink-0 items-end gap-[2px] border-b border-[#9a9fa8] pl-px">
            {tabs.map((t, i) => (
              <button
                key={t.label}
                type="button"
                className={
                  i === 2
                    ? "-mx-px -mb-px h-[28px] shrink-0 rounded-t-[3px] border border-b-0 border-[#9a9fa8] bg-white text-[13px] font-bold whitespace-nowrap text-[#00009c] " + t.width
                    : "h-[26px] shrink-0 rounded-t-[3px] border border-b-0 border-[#9a9fa8] bg-linear-to-b from-white to-[#ececec] whitespace-nowrap " + t.width
                }
              >
                {t.label}
              </button>
            ))}
          </nav>
          <div className="flex min-h-0 flex-1 bg-[#f0f0f0] pt-px">
            <div className="flex min-w-0 flex-[839_1_0%] flex-col">
              <div className="mr-[6px] ml-px">
                <EmptyGrid />
              </div>
              <Splitter />
              <ConversionPanel />
            </div>
            <div className="flex min-w-0 flex-[830_1_0%] flex-col">
              <div className="ml-px">
                <BillGrid />
              </div>
              <Splitter />
              <div className="flex min-h-0 flex-1 overflow-hidden">
                <FeePanel />
                <div className="w-[9px] shrink-0 pt-[68px]">
                  <div className="flex h-full w-[8px] flex-col items-center border border-[#9a9fa8] bg-white py-2">
                    <svg width="5" height="8" viewBox="0 0 5 8" fill="none" stroke="#000" strokeWidth="1.500"><path d="m0 1 4 3-4 3" /></svg>
                    <div className="flex-1 border-l border-dotted border-[#0078d7]" />
                    <svg width="5" height="8" viewBox="0 0 5 8" fill="none" stroke="#000" strokeWidth="1.500"><path d="m0 1 4 3-4 3" /></svg>
                  </div>
                </div>
                <FactorPanel />
              </div>
            </div>
          </div>
        </main>
      </div>
      <QuotaDialog />
      <Remarks />
    </div>
  );
}
